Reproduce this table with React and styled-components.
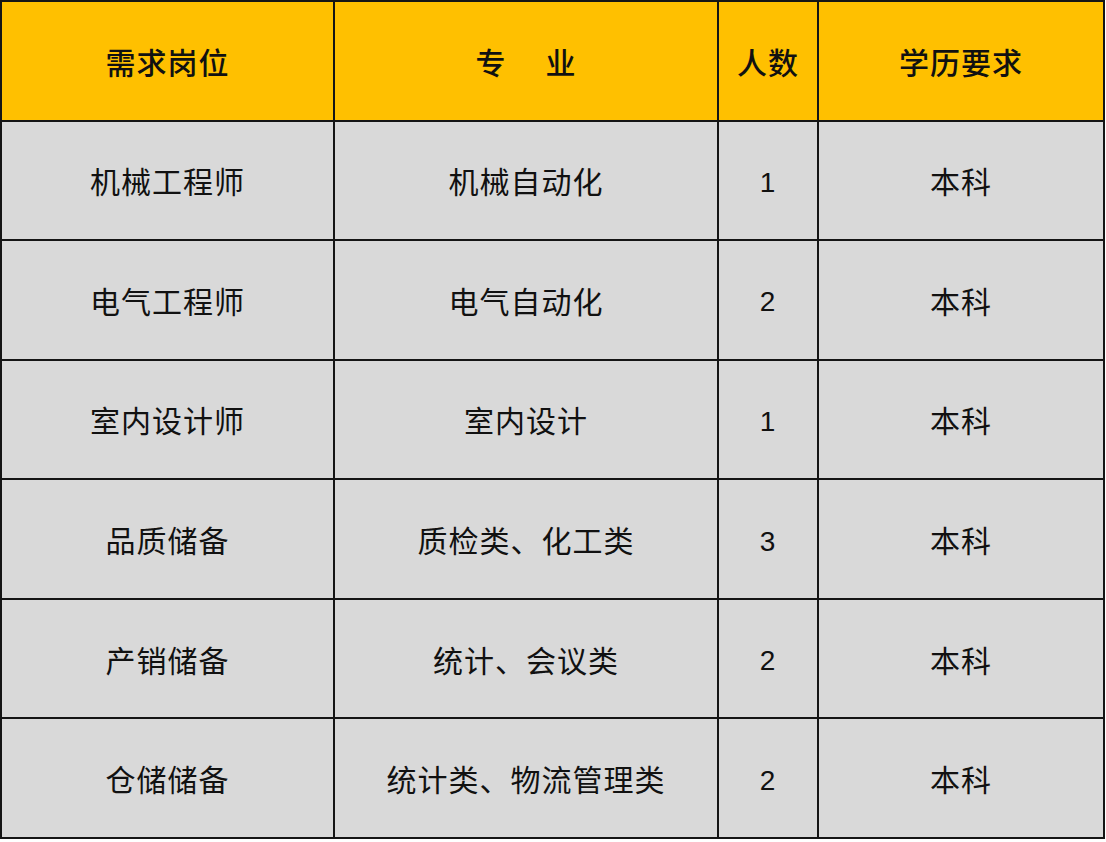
import React from "react";
import styled, { createGlobalStyle } from "styled-components";

const GlobalStyle = createGlobalStyle`
    html, body {
        margin: 0;
        padding: 0;
        background: #ffffff;
    }
`

const rows = [
    ["机械工程师", "机械自动化", "1", "本科"],
    ["电气工程师", "电气自动化", "2", "本科"],
    ["室内设计师", "室内设计", "1", "本科"],
    ["品质储备", "质检类、化工类", "3", "本科"],
    ["产销储备", "统计、会议类", "2", "本科"],
    ["仓储储备", "统计类、物流管理类", "2", "本科"],
]

const App = () => {
    return (
        <>
            <GlobalStyle />
            <Table>
                <HeadCell>需求岗位</HeadCell>
                <HeadCell>专<Gap />业</HeadCell>
                <HeadCell>人数</HeadCell>
                <HeadCell>学历要求</HeadCell>
                {rows.map((row, i) =>
                    row.map((text, j) => (
                        <Cell key={`${i}-${j}`} $num={j === 2}>{text}</Cell>
                    ))
                )}
            </Table>
        </>
    )
}

const Table = styled.div`
    display: grid;
    grid-template-columns: 331px 382px 98px 284px;
    grid-template-rows: repeat(7, 1fr);
    gap: 2px;
    padding: 2px;
    width: 1105px;
    height: 839px;
    box-sizing: border-box;
    background: #151515;
`

const HeadCell = styled.div`
    display: flex;
    align-items: center;
    justify-content: center;
    background: #ffc000;
    color: #111111;
    font-family: "Noto Sans CJK SC", "Liberation Sans", sans-serif;
    font-size: 30px;
    font-weight: 500;
    letter-spacing: 1px;
`

const Gap = styled.span`
    display: inline-block;
    width: 39px;
`

const Cell = styled.div`
    display: flex;
    align-items: center;
    justify-content: center;
    background: #d9d9d9;
    color: #111111;
    font-family: "Liberation Sans", "Noto Sans CJK SC", sans-serif;
    font-size: ${p => (p.$num ? "28px" : "30px")};
    padding-top: ${p => (p.$num ? "5px" : "0")};
    letter-spacing: 1px;
`

export default App
